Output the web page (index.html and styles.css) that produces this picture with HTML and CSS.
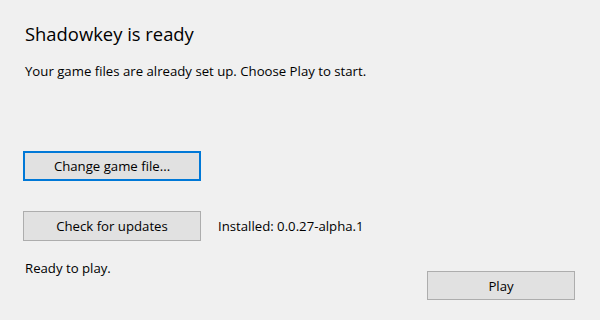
FILE: index.html
```html
<!DOCTYPE html>
<html lang="en">
<head>
    <meta charset="UTF-8">
    <title>Shadowkey</title>
    <link rel="stylesheet" href="styles.css">
</head>
<body>
    <div class="window">
        <h1 class="title">Shadowkey is ready</h1>
        <p class="label subtitle">Your game files are already set up. Choose Play to start.</p>

        <button class="btn btn-wide focused">Change game file...</button>

        <div class="update-row">
            <button class="btn btn-wide">Check for updates</button>
            <span class="label">Installed: 0.0.27-alpha.1</span>
        </div>

        <div class="footer">
            <span class="label status">Ready to play.</span>
            <button class="btn btn-play">Play</button>
        </div>
    </div>
</body>
</html>
```

FILE: styles.css
```css
html, body {
    margin: 0;
    height: 100%;
    background-color: #f0f0f0;
}
body {
    font-family: "Segoe UI", "Open Sans", "Noto Sans", sans-serif;
    font-size: 13.2px;
    color: #000;
}
.window {
    padding: 23px 25px 0 23px;
}
.title {
    margin: 0;
    padding-left: 2px;
    font-size: 18.4px;
    font-weight: normal;
    line-height: 22px;
}
.label {
    line-height: 16px;
}
.subtitle {
    margin: 18px 0 0;
    padding-left: 2px;
}
.btn {
    display: block;
    box-sizing: border-box;
    height: 30px;
    padding: 0;
    border: 1px solid #adadad;
    background-color: #e1e1e1;
    font-family: inherit;
    font-size: 13.2px;
    color: #000;
}
.btn-wide {
    width: 178px;
}
.focused {
    margin-top: 72px;
    border: 2px solid #0078d7;
}
.update-row {
    display: flex;
    align-items: center;
    gap: 17px;
    margin-top: 30px;
}
.footer {
    display: flex;
    justify-content: space-between;
    align-items: flex-start;
    margin-top: 19px;
}
.status {
    padding-left: 2px;
}
.btn-play {
    width: 148px;
    height: 29px;
    margin-top: 11px;
}
```
